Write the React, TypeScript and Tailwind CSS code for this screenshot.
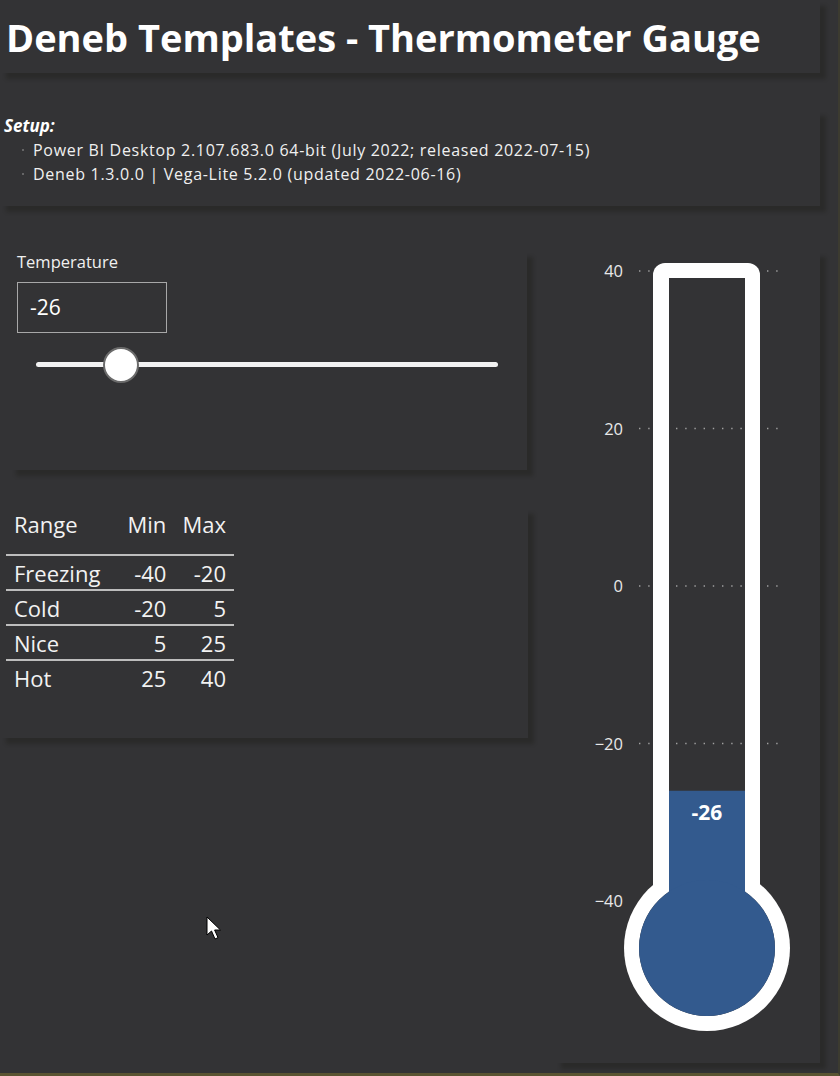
import React from "react";

const font = { fontFamily: '"Open Sans", "Noto Sans", sans-serif' };

const ranges = [
  { name: "Freezing", min: -40, max: -20 },
  { name: "Cold", min: -20, max: 5 },
  { name: "Nice", min: 5, max: 25 },
  { name: "Hot", min: 25, max: 40 },
];

const panel = "bg-[#333335] shadow-[6px_6px_4px_rgba(12,12,0,0.22)]";

// value → page y (40 at 270, -40 at 900)
const yOf = (v: number) => 585 - v * 7.875;

function Thermometer({ value }: { value: number }) {
  const ticks = [40, 20, 0, -20, -40];
  const top = yOf(value);
  return (
    <svg width="265" height="812" viewBox="555 250 265 812" className="block">
      {/* outer shell */}
      <rect x="653" y="262" width="107" height="640" rx="12" fill="#ffffff" />
      <circle cx="707" cy="947" r="83" fill="#ffffff" />
      {/* inner */}
      <rect x="669" y="277" width="76" height="640" fill="#333335" />
      <circle cx="707" cy="947" r="68" fill="#333335" />
      {/* fill */}
      <rect x="669" y={top} width="76" height={947 - top} fill="#335a8e" />
      <circle cx="707" cy="947" r="68" fill="#335a8e" />
      {ticks.map((t) => {
        const y = yOf(t);
        return (
          <g key={t}>
            {t > -40 && (
              <g stroke="#a0a0a0" strokeWidth="1.4" strokeDasharray="1.4 7.8">
                <line x1="639" y1={y} x2="652" y2={y} />
                <line x1="767" y1={y} x2="780" y2={y} />
                {y > 277 && y < top && <line x1="676" y1={y} x2="745" y2={y} />}
              </g>
            )}
            <text
              x="623"
              y={y + 6}
              textAnchor="end"
              fill="#e8e8e8"
              fontSize="16.5"
              style={font}
            >
              {t < 0 ? `\u2212${Math.abs(t)}` : t}
            </text>
          </g>
        );
      })}
      <text
        x="707"
        y={top + 29}
        textAnchor="middle"
        fill="#ffffff"
        fontSize="21"
        fontWeight="700"
        style={font}
      >
        {value}
      </text>
    </svg>
  );
}

export default function App() {
  const value = -26;
  return (
    <div
      className="relative h-[1076px] w-[840px] overflow-hidden border-r-2 border-b-[3px] border-r-[#3c3b30] border-b-[#5a5432] bg-[#333335] text-[#f2f2f2]"
      style={font}
    >
      <div className={`${panel} flex h-[73px] w-[820px] items-center px-[6px]`}>
        <h1 className="text-[38px] leading-none font-bold text-white">
          Deneb Templates - Thermometer Gauge
        </h1>
      </div>

      <div className={`${panel} mt-[37px] h-[96px] w-[820px] px-[4px] pt-[4px]`}>
        <p className="text-[17px] leading-[24px] font-bold italic text-white">Setup:</p>
        <ul className="text-[16px] leading-[24px] tracking-[0.7px] text-[#f0f0f0]">
          <li className="flex items-center gap-[9px] pl-[18px]">
            <span className="h-[2px] w-[2px] rounded-full bg-[#777]" />
            Power BI Desktop 2.107.683.0 64-bit (July 2022; released 2022-07-15)
          </li>
          <li className="flex items-center gap-[9px] pl-[18px]">
            <span className="h-[2px] w-[2px] rounded-full bg-[#777]" />
            Deneb 1.3.0.0 | Vega-Lite 5.2.0 (updated 2022-06-16)
          </li>
        </ul>
      </div>

      <div className="mt-[45px] flex items-start">
        <div className="flex w-[555px] flex-col">
          <div className={`${panel} ml-[10px] h-[219px] w-[517px] px-[7px]`}>
            <p className="text-[16.5px] leading-[22px] text-[#f0f0f0]">Temperature</p>
            <div className="mt-[9px] flex h-[51px] w-[150px] items-center border border-[#a8a8a8] pl-[12px] text-[21px] text-white">
              {value}
            </div>
            <div className="relative mt-[11px] ml-[19px] h-[40px] w-[462px]">
              <div className="absolute top-[18px] left-0 h-[5px] w-full rounded-full bg-[#f2f2f2]" />
              <div className="absolute top-[3px] left-[67px] h-[36px] w-[36px] rounded-full border-2 border-[#6b6b6b] bg-white" />
            </div>
          </div>

          <div className={`${panel} mt-[38px] h-[230px] w-[528px] pt-[1px] pl-[6px]`}>
            <table className="w-[228px] border-collapse text-[22px]">
              <thead>
                <tr className="h-[46px] border-b-2 border-[#bdbdbd] align-top">
                  <th className="pl-[8px] text-left leading-[30px] font-normal">Range</th>
                  <th className="pr-[6px] text-right leading-[30px] font-normal">Min</th>
                  <th className="pr-[8px] text-right leading-[30px] font-normal">Max</th>
                </tr>
              </thead>
              <tbody>
                {ranges.map((r, i) => (
                  <tr
                    key={r.name}
                    className={`h-[35px] ${i < ranges.length - 1 ? "border-b-2 border-[#bdbdbd]" : ""}`}
                  >
                    <td className="pl-[8px] leading-none">{r.name}</td>
                    <td className="pr-[6px] text-right leading-none">{r.min}</td>
                    <td className="pr-[8px] text-right leading-none">{r.max}</td>
                  </tr>
                ))}
              </tbody>
            </table>
          </div>
        </div>

        <div className={`${panel} h-[812px] w-[265px]`}>
          <Thermometer value={value} />
        </div>
      </div>

      <svg
        className="absolute top-[916px] left-[206px]"
        width="18"
        height="26"
        viewBox="0 0 18 26"
      >
        <path
          d="M1 1 L1 19 L5.5 15 L9 23 L12 21.6 L8.6 14 L14.5 14 Z"
          fill="#ffffff"
          stroke="#000000"
          strokeWidth="1"
          strokeLinejoin="round"
        />
      </svg>
    </div>
  );
}
